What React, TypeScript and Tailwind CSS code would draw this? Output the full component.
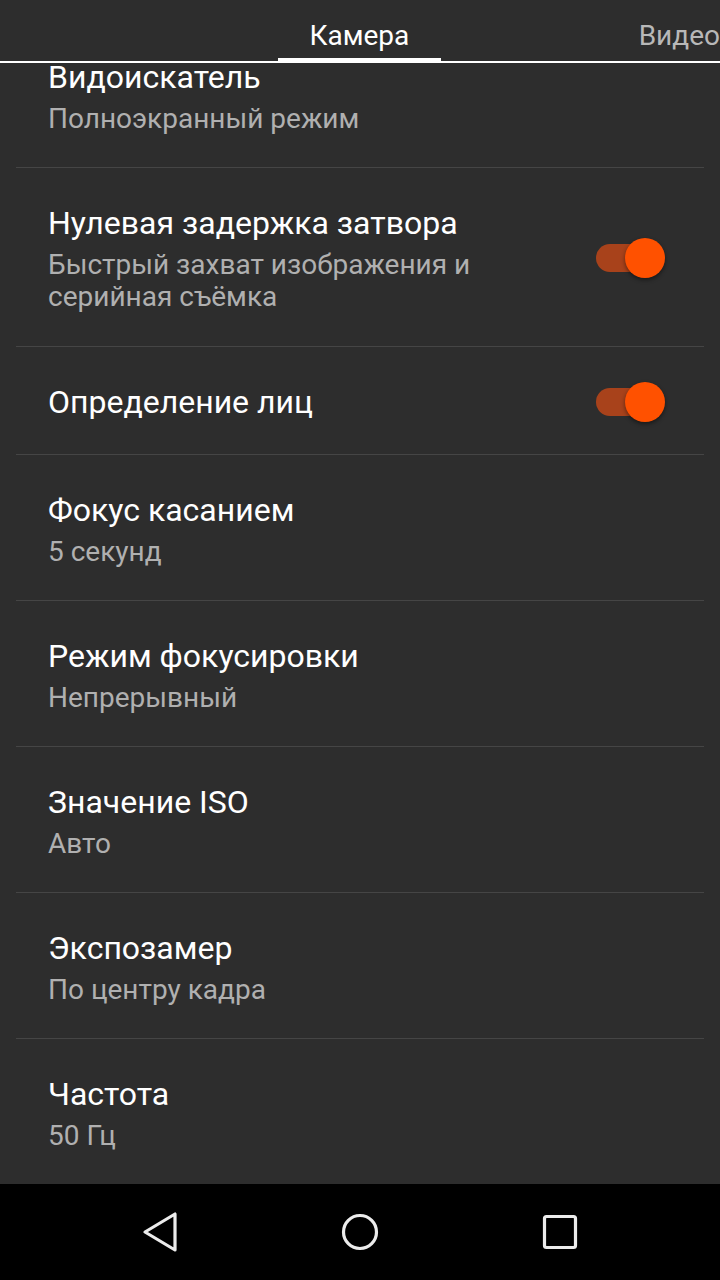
type Setting = {
  title: string;
  subtitle?: string[];
  toggle?: boolean;
};

const settings: Setting[] = [
  { title: "Видоискатель", subtitle: ["Полноэкранный режим"] },
  { title: "Нулевая задержка затвора", subtitle: ["Быстрый захват изображения и", "серийная съёмка"], toggle: true },
  { title: "Определение лиц", toggle: true },
  { title: "Фокус касанием", subtitle: ["5 секунд"] },
  { title: "Режим фокусировки", subtitle: ["Непрерывный"] },
  { title: "Значение ISO", subtitle: ["Авто"] },
  { title: "Экспозамер", subtitle: ["По центру кадра"] },
  { title: "Частота", subtitle: ["50 Гц"] },
];

export default function App() {
  return (
    <div
      className="flex h-[1280px] w-[720px] flex-col overflow-hidden bg-[#2d2d2d] text-white"
      style={{ fontFamily: "Roboto, 'Noto Sans', sans-serif" }}
    >
      <Tabs />
      <div className="flex-1 overflow-hidden">
        <div className="mx-4 -mt-[41px]">
          {settings.map((s, i) => (
            <SettingRow key={s.title} setting={s} first={i === 0} />
          ))}
        </div>
      </div>
      <NavBar />
    </div>
  );
}

function Tabs() {
  return (
    <div className="relative z-10 flex h-[63px] shrink-0 border-b-2 border-white bg-[#2d2d2d] pl-[278px]">
      <div className="flex w-[164px] flex-col">
        <div className="flex flex-1 items-center justify-center pt-[14px] text-[28px] text-white">Камера</div>
        <div className="h-[3px] bg-white" />
      </div>
      <div className="ml-[198px] flex items-center whitespace-nowrap pt-[10px] text-[28px] text-[#b8b8b8]">Видео</div>
    </div>
  );
}

function SettingRow({ setting, first }: { setting: Setting; first: boolean }) {
  const lines = setting.subtitle ?? [];
  return (
    <div
      className={`flex items-center justify-between pl-8 pr-[39px] ${first ? "" : "border-t border-[#454545]"} ${
        lines.length > 1 ? "pt-[35px] pb-[33px]" : "pt-[35px] pb-[32px]"
      }`}
    >
      <div className="min-w-0">
        <div className="whitespace-nowrap text-[32px] leading-[40px] text-white">{setting.title}</div>
        {lines.length > 0 && (
          <div className="mt-[6px] text-[28px] leading-[32px] text-[#b0b0b0]">
            {lines.map((l) => (
              <div key={l} className="whitespace-nowrap">
                {l}
              </div>
            ))}
          </div>
        )}
      </div>
      {setting.toggle && <Toggle />}
    </div>
  );
}

function Toggle() {
  return (
    <div className="relative flex h-[40px] w-[69px] shrink-0 items-center">
      <div className="h-[28px] w-[62px] rounded-full bg-[#a8421b]" />
      <div className="absolute right-0 top-0 h-[40px] w-[40px] rounded-full bg-[#ff5100] shadow-[0_2px_4px_rgba(0,0,0,0.45)]" />
    </div>
  );
}

function NavBar() {
  return (
    <div className="flex h-[96px] shrink-0 items-center justify-center bg-black">
      <div className="flex w-[200px] justify-center">
        <svg width="40" height="44" viewBox="0 0 40 44" fill="none">
          <path d="M5 22 L35 4 L35 40 Z" stroke="#ececec" strokeWidth="3.2" strokeLinejoin="round" />
        </svg>
      </div>
      <div className="flex w-[200px] justify-center">
        <svg width="40" height="40" viewBox="0 0 40 40" fill="none">
          <circle cx="20" cy="20" r="16.5" stroke="#ececec" strokeWidth="3.2" />
        </svg>
      </div>
      <div className="flex w-[200px] justify-center">
        <svg width="36" height="36" viewBox="0 0 36 36" fill="none">
          <rect x="2.5" y="2.5" width="31" height="31" rx="2" stroke="#ececec" strokeWidth="3.2" />
        </svg>
      </div>
    </div>
  );
}
